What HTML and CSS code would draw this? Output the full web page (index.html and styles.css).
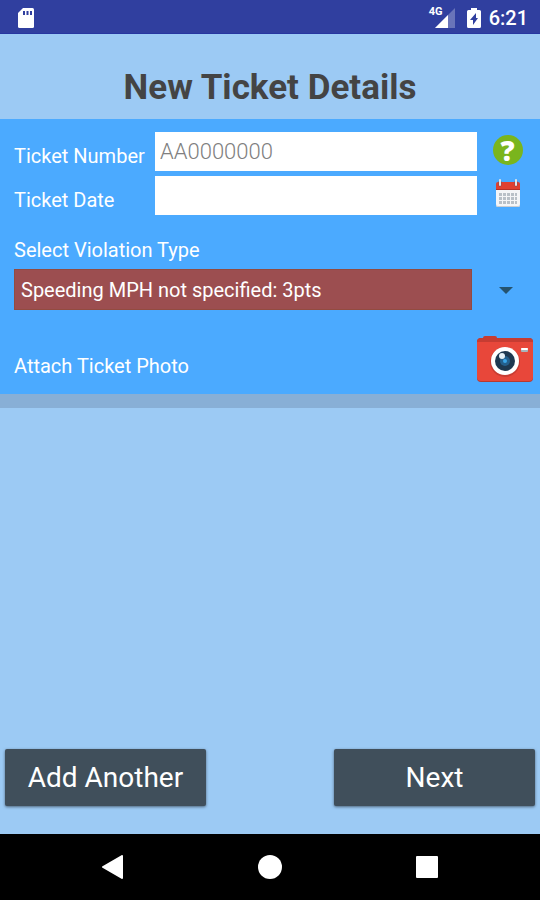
FILE: index.html
```html
<!DOCTYPE html>
<html lang="en">
<head>
<meta charset="utf-8">
<meta name="viewport" content="width=device-width, initial-scale=1">
<title>New Ticket Details</title>
<link rel="stylesheet" href="styles.css">
</head>
<body>
<div class="status-bar">
  <svg class="sd-card" width="18" height="22" viewBox="0 0 18 22" aria-hidden="true">
    <path fill="#fff" d="M6 1h9.500a1.500 1.500 0 0 1 1.500 1.500v17a1.500 1.500 0 0 1-1.500 1.500h-13A1.500 1.500 0 0 1 1 19.500V6z"/>
    <path fill="#303f9f" d="M6 4h2v4H6zM9.500 4h2v4h-2zM13 4h2v4h-2z"/>
  </svg>
  <div class="status-right">
    <div class="signal">
      <span class="network">4G</span>
      <svg width="21" height="20" viewBox="0 0 21 20" aria-hidden="true">
        <path fill="#6974b9" d="M21 0v20H1z"/>
        <path fill="#fff" d="M14 7v13H1z"/>
      </svg>
    </div>
    <svg width="14" height="22" viewBox="0 0 14 22" aria-hidden="true">
      <path fill="#fff" d="M4 1h6v2h2.500A1.500 1.500 0 0 1 14 4.500v15a1.500 1.500 0 0 1-1.500 1.500h-11A1.500 1.500 0 0 1 0 19.500v-15A1.500 1.500 0 0 1 1.500 3H4z"/>
      <path fill="#303f9f" d="M9 6v5h2l-5 7v-5H3z"/>
    </svg>
    <span class="clock">6:21</span>
  </div>
</div>

<main class="screen">
  <h1 class="title">New Ticket Details</h1>
  <form class="panel">
    <div class="fields">
      <label for="number">Ticket Number</label>
      <input class="field" id="number" type="text" placeholder="AA0000000">
      <button class="icon-button help" type="button">?</button>
      <label for="date">Ticket Date</label>
      <input class="field" id="date" type="text">
      <button class="icon-button" type="button" aria-label="Pick a date">
        <svg width="26" height="30" viewBox="0 0 26 30" aria-hidden="true">
          <path fill="#f4f5f7" d="M1 10h24v16a2 2 0 0 1-2 2H3a2 2 0 0 1-2-2z"/>
          <path fill="#c9cdd2" d="M1 25v1a2 2 0 0 0 2 2h20a2 2 0 0 0 2-2v-1a2 2 0 0 1-2 2H3a2 2 0 0 1-2-2z"/>
          <path fill="#e04030" d="M3 3h20a2 2 0 0 1 2 2v6H1V5a2 2 0 0 1 2-2z"/>
          <path fill="#b53025" d="M1 10h24v1H1z"/>
          <path stroke="#b9c0c7" stroke-width="3" stroke-dasharray="3 1" d="M4 15.500h18M4 19.500h18M4 23.500h18"/>
          <path stroke="#8d4a50" stroke-width="3" stroke-linecap="round" d="M5 3v3M21 3v3"/>
          <path stroke="#e3e6ea" stroke-width="2" stroke-linecap="round" d="M5 1v5M21 1v5"/>
        </svg>
      </button>
    </div>

    <label class="type-label" for="type">Select Violation Type</label>
    <div class="type-row">
      <select class="type-select" id="type">
        <option>Speeding MPH not specified: 3pts</option>
      </select>
      <svg class="caret" width="14" height="8" viewBox="0 0 14 8" aria-hidden="true"><path fill="#25536f" d="M0 1h14L7 8z"/></svg>
    </div>

    <div class="photo-row">
      <label for="photo">Attach Ticket Photo</label>
      <button class="icon-button" id="photo" type="button" aria-label="Attach Ticket Photo">
        <svg width="58" height="48" viewBox="0 0 58 48" aria-hidden="true">
          <path fill="#c63c32" d="M7 4V2q0-2 2-2h10q2 0 2 2v2z"/>
          <rect x="1" y="2" width="56" height="44" rx="4" fill="#b73a31"/>
          <rect x="1" y="3" width="56" height="42" rx="4" fill="#e8473a"/>
          <path fill="#c63c32" d="M5 2h48q4 0 4 4H1q0-4 4-4z"/>
          <circle cx="29" cy="26" r="15" fill="#c83c32"/>
          <circle cx="29" cy="25" r="14" fill="#fff"/>
          <circle cx="29" cy="25" r="10" fill="#1e3850"/>
          <circle cx="29" cy="25" r="5" fill="#245f8c"/>
          <circle cx="29" cy="25" r="2" fill="#3aa5e8"/>
          <circle cx="26" cy="20" r="3" fill="#e6f0f6"/>
          <rect x="45" y="12" width="7" height="4" rx="1" fill="#a7b3bb"/>
          <rect x="45" y="12" width="7" height="2" rx="1" fill="#fff"/>
        </svg>
      </button>
    </div>
  </form>

  <div class="actions">
    <button class="action" type="button">Add Another</button>
    <button class="action" type="button">Next</button>
  </div>
</main>

<nav class="nav-bar">
  <button class="nav-button" type="button" aria-label="Back">
    <svg width="24" height="24" viewBox="0 0 24 24" aria-hidden="true"><path fill="#fff" stroke="#fff" stroke-width="2" stroke-linejoin="round" d="M21 1v22L2 12z"/></svg>
  </button>
  <button class="nav-button" type="button" aria-label="Home">
    <svg width="24" height="24" viewBox="0 0 24 24" aria-hidden="true"><circle cx="12" cy="12" r="12" fill="#fff"/></svg>
  </button>
  <button class="nav-button" type="button" aria-label="Recent apps">
    <svg width="24" height="24" viewBox="0 0 24 24" aria-hidden="true"><rect x="1" y="1" width="22" height="22" rx="1" fill="#fff"/></svg>
  </button>
</nav>
</body>
</html>
```
FILE: styles.css
```css
* {
  box-sizing: border-box;
}

body {
  margin: 0;
  min-height: 100vh;
  display: flex;
  flex-direction: column;
  background: #9ccaf4;
  font-family: Roboto, "Liberation Sans", sans-serif;
  font-size: 20px;
  line-height: 24px;
  color: #fff;
}

button,
input,
select {
  font: inherit;
  border: 0;
  margin: 0;
}

svg {
  display: block;
}

.status-bar {
  display: flex;
  justify-content: space-between;
  align-items: center;
  height: 34px;
  padding: 2px 12px 0 17px;
  background: #303f9f;
  border-bottom: 1px solid #2636a0;
}

.status-right {
  display: flex;
  align-items: center;
  gap: 12px;
}

.signal {
  display: flex;
  position: relative;
  padding-left: 4px;
}

.network {
  position: absolute;
  right: 12px;
  top: -2px;
  font-size: 11px;
  line-height: 12px;
  font-weight: 700;
}

.clock {
  font-weight: 500;
  margin-left: -4px;
}

.screen {
  flex: 1;
  display: flex;
  flex-direction: column;
}

.title {
  margin: 0;
  padding: 34px 0 11px;
  font-size: 35px;
  line-height: 40px;
  font-weight: 700;
  text-align: center;
  color: #444;
}

.panel {
  padding: 13px 6px 10px 14px;
  background: #4baaff;
  border-bottom: 14px solid #88afd6;
}

.fields {
  display: grid;
  grid-template-columns: 141px 1fr 57px;
  row-gap: 5px;
  align-items: center;
}

.fields label {
  padding-top: 8px;
}

.field {
  width: 100%;
  height: 39px;
  padding: 0 5px;
  font-size: 22px;
  color: #444;
  background: #fff;
  border-radius: 0;
}

.field::placeholder {
  color: #808080;
  font-weight: 300;
  opacity: 1;
}

.icon-button {
  padding: 0;
  background: none;
  justify-self: center;
}

.fields .icon-button {
  margin: 0 0 4px 4px;
}

.fields .help {
  width: 30px;
  height: 30px;
  border-radius: 50%;
  background: #7ab51d;
  color: #fff;
  font-family: "Open Sans", sans-serif;
  font-size: 28px;
  line-height: 28px;
  font-weight: 800;
}

.type-label {
  display: block;
  margin: 23px 0 7px;
}

.type-row {
  display: flex;
  align-items: center;
  gap: 27px;
  padding-right: 21px;
}

.type-select {
  flex: 1;
  min-width: 0;
  height: 41px;
  padding: 0 6px;
  appearance: none;
  border: 1px solid #934b40;
  border-radius: 0;
  background: #9c4e50;
  color: #fff;
}

.photo-row {
  display: flex;
  justify-content: space-between;
  align-items: center;
  margin-top: 26px;
}

.photo-row label {
  padding-top: 12px;
}

.actions {
  display: flex;
  justify-content: space-between;
  margin-top: auto;
  padding: 0 5px 28px;
}

.action {
  width: 37%;
  flex: 0 1 201px;
  height: 57px;
  border-radius: 2px;
  background: #404f5b;
  color: #fff;
  font-size: 28px;
  line-height: 32px;
  box-shadow: 0 1px 3px rgba(0, 0, 0, 0.5);
}

.nav-bar {
  display: flex;
  justify-content: center;
  height: 66px;
  background: #000;
}

.nav-button {
  display: flex;
  justify-content: center;
  align-items: center;
  width: 29%;
  padding: 0;
  background: none;
}
```
